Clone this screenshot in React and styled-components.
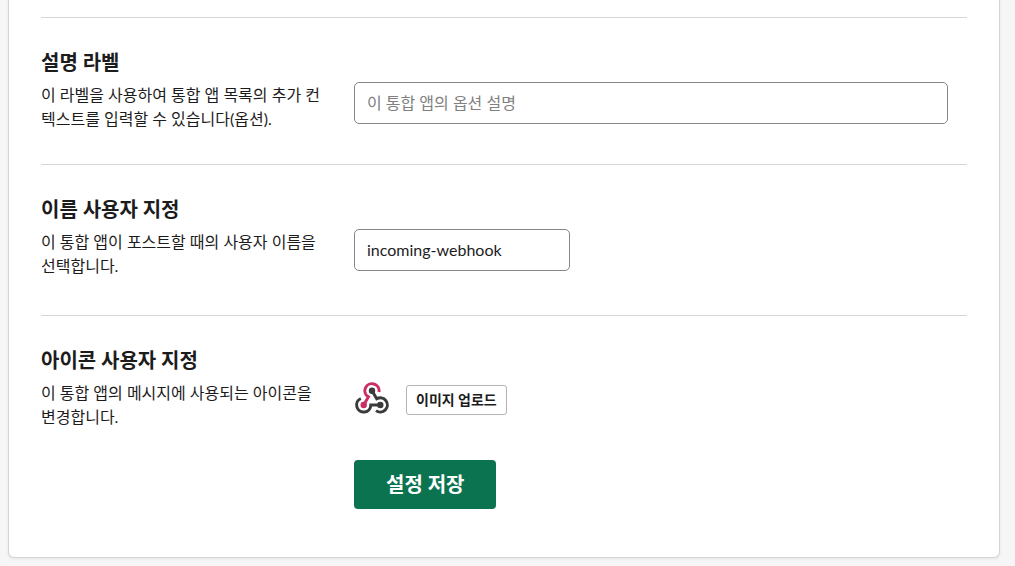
import React from 'react';
import styled, { createGlobalStyle } from 'styled-components';

const GlobalStyle = createGlobalStyle`
  *, *::before, *::after {
    box-sizing: border-box;
  }

  body {
    margin: 0;
    background: #f6f6f6;
    color: #1d1c1d;
    font-family: Lato, "Noto Sans CJK KR", sans-serif;
    font-size: 16px;
    line-height: 24px;
  }

  button, input {
    font-family: inherit;
    color: inherit;
  }
`;

const Page = styled.main`
  padding: 0 15px 8px 8px;
`;

const Card = styled.form`
  padding: 17px 32px 48px;
  background: #fff;
  border: 1px solid #d4d4d4;
  border-top: 0;
  border-radius: 0 0 6px 6px;
  box-shadow: 0 1px 3px rgba(0, 0, 0, 0.08);
`;

const Row = styled.section`
  display: grid;
  grid-template-columns: 281px minmax(0, 1fr);
  column-gap: 32px;
  padding: 30px 0 ${props => props.$bottom || 0}px;
  border-top: 1px solid #d6d6d6;
`;

const Title = styled.label`
  display: block;
  margin-bottom: 7px;
  font-size: 20px;
  font-weight: 700;
  line-height: 28px;
`;

const Description = styled.p`
  margin: 0;
`;

const Field = styled.div`
  padding: 34px 19px 0 0;
`;

const TextInput = styled.input`
  display: block;
  width: ${props => props.$width || '100%'};
  max-width: 100%;
  height: 42px;
  padding: 0 12px 2px;
  background: #fff;
  border: 1px solid #868686;
  border-radius: 5px;
  font-size: 16px;

  &::placeholder {
    color: #808080;
    opacity: 1;
  }
`;

const IconRow = styled.div`
  display: flex;
  align-items: center;
  gap: 16px;
  height: 40px;
  margin-bottom: 40px;
`;

const Hook = styled.svg`
  width: 36px;
  height: 36px;
  fill: none;
  stroke-width: 3;
`;

const UploadButton = styled.button`
  height: 30px;
  padding: 0 9px 2px;
  background: #fff;
  border: 1px solid #b4b4b4;
  border-radius: 3px;
  font-size: 14px;
  font-weight: 700;
  cursor: pointer;
`;

const SaveButton = styled.button`
  height: 49px;
  padding: 0 32px 2px;
  background: #0b7350;
  border: 0;
  border-radius: 4px;
  color: #fff;
  font-size: 20px;
  font-weight: 700;
  cursor: pointer;
`;

function WebhookIcon() {
  return (
    <Hook viewBox="0 0 36 36" aria-hidden="true">
      <path stroke="#3b3b3d" d="M18 8.7L22.7 16.8A7.1 7.1 0 1 1 22 28.6" />
      <path stroke="#3b3b3d" d="M26.3 23H16.8A7.1 7.1 0 1 1 6.8 16.5" />
      <path stroke="#cd2e62" d="M9.7 23L14.4 14.9A7.1 7.1 0 1 1 25 10" />
      <circle cx="18" cy="8.7" r="3.2" fill="#3b3b3d" />
      <circle cx="26.3" cy="23" r="3.2" fill="#3b3b3d" />
      <circle cx="9.7" cy="23" r="3.2" fill="#cd2e62" />
    </Hook>
  );
}

function App() {
  return (
    <Page>
      <GlobalStyle />
      <Card onSubmit={e => e.preventDefault()}>
        <Row $bottom={33}>
          <div>
            <Title htmlFor="label">설명 라벨</Title>
            <Description>
              이 라벨을 사용하여 통합 앱 목록의 추가 컨텍스트를 입력할 수 있습니다(옵션).
            </Description>
          </div>
          <Field>
            <TextInput id="label" type="text" placeholder="이 통합 앱의 옵션 설명" />
          </Field>
        </Row>
        <Row $bottom={37}>
          <div>
            <Title htmlFor="username">이름 사용자 지정</Title>
            <Description>
              이 통합 앱이 포스트할 때의 사용자 이름을 선택합니다.
            </Description>
          </div>
          <Field>
            <TextInput id="username" type="text" $width="216px" defaultValue="incoming-webhook" />
          </Field>
        </Row>
        <Row>
          <div>
            <Title htmlFor="upload">아이콘 사용자 지정</Title>
            <Description>
              이 통합 앱의 메시지에 사용되는 아이콘을 변경합니다.
            </Description>
          </div>
          <Field>
            <IconRow>
              <WebhookIcon />
              <UploadButton id="upload" type="button">이미지 업로드</UploadButton>
            </IconRow>
            <SaveButton type="submit">설정 저장</SaveButton>
          </Field>
        </Row>
      </Card>
    </Page>
  );
}

export default App;
